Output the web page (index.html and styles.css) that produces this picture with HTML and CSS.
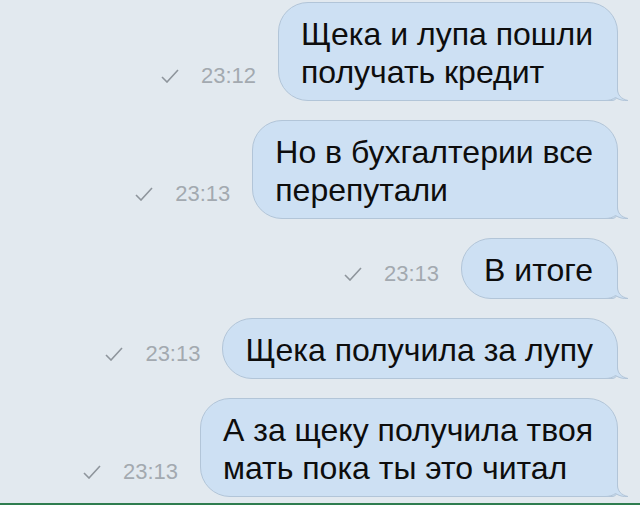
FILE: index.html
```html
<!DOCTYPE html>
<html lang="ru">
<head>
    <meta charset="UTF-8">
    <meta name="viewport" content="width=device-width, initial-scale=1.0">
    <title>Диалог</title>
    <link rel="stylesheet" href="styles.css">
</head>
<body>
    <div class="chat">
        <div class="row">
            <div class="meta">
                <svg class="check" width="18" height="14" viewBox="0 0 18 14"><path d="M1 8 L6 13 L17 1"/></svg>
                <span class="time">23:12</span>
            </div>
            <div class="bubble">Щека и лупа пошли<br>получать кредит<svg class="tail" width="24" height="26" viewBox="0 0 24 26"><path class="tail-fill" d="M0 0 H12.5 V14 C12.5 20 16 24 23 25.5 C18 26 13.5 24.5 10.5 22.5 C8 24.5 4 25.5 0 25.5 Z"/><path class="tail-line" d="M12.5 0 V14 C12.5 20 16 24 23 25.5 C18 26 13.5 24.5 10.5 22.5 C8 24.5 4 25.5 0 25.5"/></svg></div>
        </div>
        <div class="row">
            <div class="meta">
                <svg class="check" width="18" height="14" viewBox="0 0 18 14"><path d="M1 8 L6 13 L17 1"/></svg>
                <span class="time">23:13</span>
            </div>
            <div class="bubble">Но в бухгалтерии все<br>перепутали<svg class="tail" width="24" height="26" viewBox="0 0 24 26"><path class="tail-fill" d="M0 0 H12.5 V14 C12.5 20 16 24 23 25.5 C18 26 13.5 24.5 10.5 22.5 C8 24.5 4 25.5 0 25.5 Z"/><path class="tail-line" d="M12.5 0 V14 C12.5 20 16 24 23 25.5 C18 26 13.5 24.5 10.5 22.5 C8 24.5 4 25.5 0 25.5"/></svg></div>
        </div>
        <div class="row">
            <div class="meta">
                <svg class="check" width="18" height="14" viewBox="0 0 18 14"><path d="M1 8 L6 13 L17 1"/></svg>
                <span class="time">23:13</span>
            </div>
            <div class="bubble">В итоге<svg class="tail" width="24" height="26" viewBox="0 0 24 26"><path class="tail-fill" d="M0 0 H12.5 V14 C12.5 20 16 24 23 25.5 C18 26 13.5 24.5 10.5 22.5 C8 24.5 4 25.5 0 25.5 Z"/><path class="tail-line" d="M12.5 0 V14 C12.5 20 16 24 23 25.5 C18 26 13.5 24.5 10.5 22.5 C8 24.5 4 25.5 0 25.5"/></svg></div>
        </div>
        <div class="row">
            <div class="meta">
                <svg class="check" width="18" height="14" viewBox="0 0 18 14"><path d="M1 8 L6 13 L17 1"/></svg>
                <span class="time">23:13</span>
            </div>
            <div class="bubble">Щека получила за лупу<svg class="tail" width="24" height="26" viewBox="0 0 24 26"><path class="tail-fill" d="M0 0 H12.5 V14 C12.5 20 16 24 23 25.5 C18 26 13.5 24.5 10.5 22.5 C8 24.5 4 25.5 0 25.5 Z"/><path class="tail-line" d="M12.5 0 V14 C12.5 20 16 24 23 25.5 C18 26 13.5 24.5 10.5 22.5 C8 24.5 4 25.5 0 25.5"/></svg></div>
        </div>
        <div class="row">
            <div class="meta">
                <svg class="check" width="18" height="14" viewBox="0 0 18 14"><path d="M1 8 L6 13 L17 1"/></svg>
                <span class="time">23:13</span>
            </div>
            <div class="bubble">А за щеку получила твоя<br>мать пока ты это читал<svg class="tail" width="24" height="26" viewBox="0 0 24 26"><path class="tail-fill" d="M0 0 H12.5 V14 C12.5 20 16 24 23 25.5 C18 26 13.5 24.5 10.5 22.5 C8 24.5 4 25.5 0 25.5 Z"/><path class="tail-line" d="M12.5 0 V14 C12.5 20 16 24 23 25.5 C18 26 13.5 24.5 10.5 22.5 C8 24.5 4 25.5 0 25.5"/></svg></div>
        </div>
    </div>
    <div class="bottom-line"></div>
</body>
</html>
```

FILE: styles.css
```css
html, body {
    height: 100%;
}

body {
    margin: 0;
    font-family: "Liberation Sans", Arial, sans-serif;
    background-color: #e2e9ef;
    display: flex;
    flex-direction: column;
    overflow: hidden;
}

.chat {
    flex: 1;
    display: flex;
    flex-direction: column;
    align-items: flex-end;
    gap: 19px;
    padding: 2px 22px 0 0;
}

.row {
    display: flex;
    align-items: last baseline;
    gap: 22px;
}

.meta {
    display: flex;
    align-items: baseline;
    gap: 22px;
}

.check {
    fill: none;
    stroke: #8e959c;
    stroke-width: 1.6;
}

.time {
    font-size: 22px;
    color: #a3a9b0;
}

.bubble {
    position: relative;
    background-color: #cde0f3;
    border: 1px solid #b2c5d8;
    border-radius: 30px;
    border-bottom-right-radius: 6px;
    padding: 12px 24px 9px 22px;
    font-size: 32px;
    line-height: 38px;
    color: #0d0d0d;
    white-space: nowrap;
}

.tail {
    position: absolute;
    right: -12px;
    bottom: -1px;
}

.tail-fill {
    fill: #cde0f3;
}

.tail-line {
    fill: none;
    stroke: #b2c5d8;
    stroke-width: 1;
}

.bottom-line {
    height: 2px;
    background-color: #2f7d4f;
}
```
